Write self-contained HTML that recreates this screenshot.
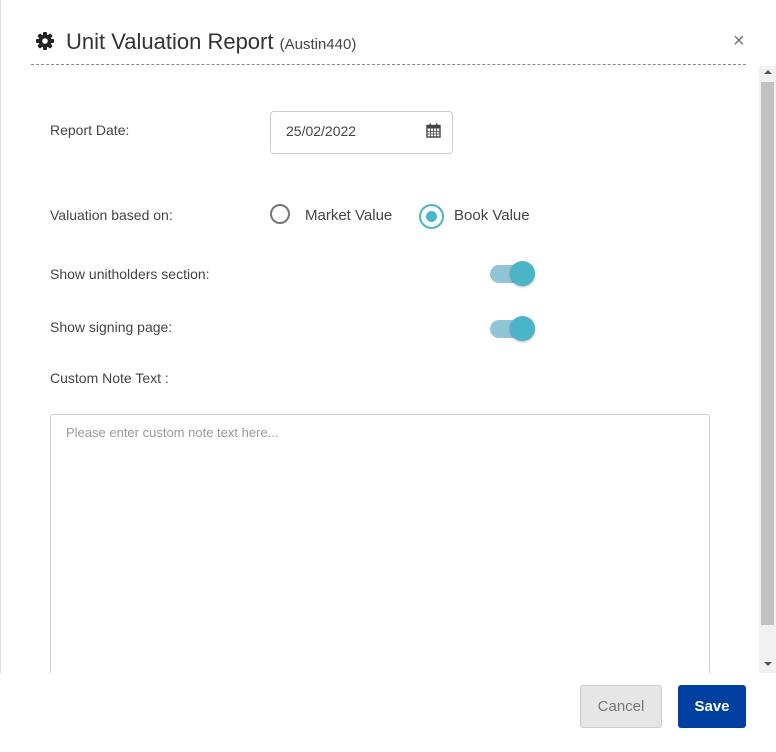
<!DOCTYPE html>
<html><head><style>
body{margin:0;width:776px;height:752px;background:#fff;font-family:"Liberation Sans",sans-serif;position:relative;overflow:hidden;color:#333}
.a{position:absolute}
.lbl{font-size:14px;color:#444}
</style></head><body>
<div class="a" style="left:0;top:0;width:1px;height:752px;background:#ddd"></div>
<svg class="a" style="left:35px;top:31px" width="20" height="20" viewBox="0 0 20 20"><g fill="#222"><circle cx="10" cy="10" r="6.5"/><g id="t"><rect x="8" y="1" width="4" height="18" rx="1"/></g><rect x="8" y="1" width="4" height="18" rx="1" transform="rotate(45 10 10)"/><rect x="8" y="1" width="4" height="18" rx="1" transform="rotate(90 10 10)"/><rect x="8" y="1" width="4" height="18" rx="1" transform="rotate(135 10 10)"/></g><circle cx="10" cy="10" r="2.8" fill="#fff"/></svg>
<div class="a" style="left:66px;top:29px;font-size:22px;color:#333">Unit Valuation Report <span style="font-size:15px;color:#444">(Austin440)</span></div>
<div class="a" style="left:733px;top:30px;font-size:20px;color:#777">×</div>
<div class="a" style="left:31px;top:64px;width:715px;border-top:1px dashed #888"></div>
<div class="a" style="left:759px;top:66px;width:17px;height:607px;background:#f1f1f1"></div>
<div class="a" style="left:761px;top:82px;width:13px;height:543px;background:#c1c1c1"></div>
<div class="a" style="left:764px;top:70px;width:0;height:0;border:4px solid transparent;border-bottom-color:#555;border-top:0"></div>
<div class="a" style="left:764px;top:662px;width:0;height:0;border:4px solid transparent;border-top-color:#555;border-bottom:0"></div>
<div class="a lbl" style="left:50px;top:122px">Report Date:</div>
<div class="a" style="left:270px;top:111px;width:181px;height:41px;border:1px solid #ccc;border-radius:4px"></div>
<div class="a" style="left:286px;top:123px;font-size:14px;color:#444">25/02/2022</div>
<svg class="a" style="left:426px;top:123px" width="15" height="15" viewBox="0 0 15 15"><rect x="1" y="2.5" width="13" height="11.5" fill="none" stroke="#444" stroke-width="1.4"/><rect x="1" y="2.5" width="13" height="3" fill="#444"/><rect x="3.5" y="0.5" width="1.6" height="3" fill="#444"/><rect x="10" y="0.5" width="1.6" height="3" fill="#444"/><path d="M1 8.5h13M1 11h13M4.5 5.5v8.5M7.5 5.5v8.5M10.5 5.5v8.5" stroke="#444" stroke-width=".8"/></svg>
<div class="a lbl" style="left:50px;top:207px">Valuation based on:</div>
<div class="a" style="left:270px;top:204px;width:20px;height:20px;border:2px solid #777;border-radius:50%;box-sizing:border-box"></div>
<div class="a lbl" style="left:305px;top:207px;font-size:15px">Market Value</div>
<div class="a" style="left:419px;top:204px;width:25px;height:25px;border:2px solid #4ab5c8;border-radius:50%;box-sizing:border-box"></div>
<div class="a" style="left:426px;top:211px;width:11px;height:11px;background:#4ab5c8;border-radius:50%"></div>
<div class="a lbl" style="left:454px;top:207px;font-size:15px">Book Value</div>
<div class="a lbl" style="left:50px;top:266px">Show unitholders section:</div>
<div class="a" style="left:490px;top:265px;width:40px;height:18px;background:#91c4d4;border-radius:9px"></div>
<div class="a" style="left:510px;top:261px;width:25px;height:25px;background:#4ab5c8;border-radius:50%;box-shadow:0 1px 2px rgba(0,0,0,.3)"></div>
<div class="a lbl" style="left:50px;top:319px">Show signing page:</div>
<div class="a" style="left:490px;top:320px;width:40px;height:18px;background:#91c4d4;border-radius:9px"></div>
<div class="a" style="left:510px;top:316px;width:25px;height:25px;background:#4ab5c8;border-radius:50%;box-shadow:0 1px 2px rgba(0,0,0,.3)"></div>
<div class="a lbl" style="left:50px;top:370px">Custom Note Text :</div>
<div class="a" style="left:50px;top:414px;width:658px;height:270px;border:1px solid #ccc;border-radius:3px"></div>
<div class="a" style="left:66px;top:425px;font-size:13px;color:#999">Please enter custom note text here...</div>
<div class="a" style="left:0;top:673px;width:759px;height:79px;background:#fff"></div>
<div class="a" style="left:580px;top:685px;width:80px;height:41px;background:#e6e6e6;border:1px solid #ccc;border-radius:3px;font-size:15px;color:#777;text-align:center;line-height:41px">Cancel</div>
<div class="a" style="left:678px;top:685px;width:68px;height:43px;background:#0040a0;border-radius:3px;font-size:15px;font-weight:bold;color:#fff;text-align:center;line-height:43px">Save</div>
</body></html>
